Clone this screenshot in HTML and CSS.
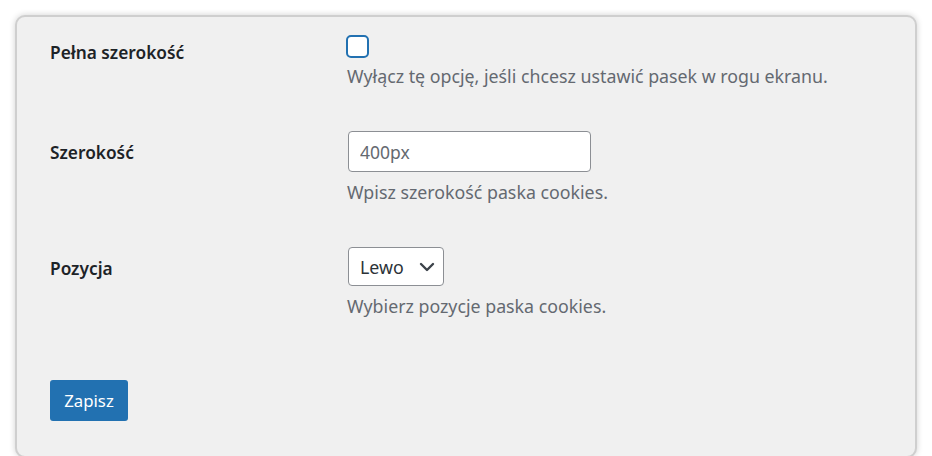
FILE: index.html
```html
<!DOCTYPE html>
<html lang="pl">
<head>
    <meta charset="UTF-8">
    <meta name="viewport" content="width=device-width, initial-scale=1.0">
    <title>Ustawienia paska cookies</title>
    <link rel="stylesheet" href="styles.css">
</head>
<body>
    <div class="panel">
        <form id="cookieForm">
            <div class="row row-first">
                <label class="row-label" for="fullWidth">Pełna szerokość</label>
                <div class="row-field">
                    <input type="checkbox" id="fullWidth" name="fullWidth" class="check">
                    <p class="description">Wyłącz tę opcję, jeśli chcesz ustawić pasek w rogu ekranu.</p>
                </div>
            </div>

            <div class="row">
                <label class="row-label" for="barWidth">Szerokość</label>
                <div class="row-field">
                    <input type="text" id="barWidth" name="barWidth" class="text-input" placeholder="400px">
                    <p class="description">Wpisz szerokość paska cookies.</p>
                </div>
            </div>

            <div class="row">
                <label class="row-label" for="position">Pozycja</label>
                <div class="row-field">
                    <div class="select-wrap">
                        <select id="position" name="position" class="select">
                            <option>Lewo</option>
                            <option>Prawo</option>
                        </select>
                        <svg class="chevron" width="16" height="10" viewBox="0 0 16 10" aria-hidden="true">
                            <path d="M2 2 L8 8 L14 2" fill="none" stroke="#3c434a" stroke-width="2.4" stroke-linecap="round" stroke-linejoin="round"/>
                        </svg>
                    </div>
                    <p class="description">Wybierz pozycje paska cookies.</p>
                </div>
            </div>

            <button type="submit" class="button-primary">Zapisz</button>
        </form>
    </div>
</body>
</html>
```

FILE: styles.css
```css
body {
    font-family: "Noto Sans", "Open Sans", sans-serif;
    background-color: #ffffff;
    margin: 0;
    padding: 15px 15px 0 15px;
    height: 100vh;
    box-sizing: border-box;
    overflow: hidden;
}

.panel {
    background-color: #f0f0f0;
    border: 2px solid #cfcfcf;
    border-radius: 10px;
    box-shadow: 0 0 6px rgba(0, 0, 0, 0.18);
    padding: 18px 33px 0 33px;
    height: 443px;
    box-sizing: border-box;
}

.row {
    display: grid;
    grid-template-columns: 297px 1fr;
    margin-top: 42px;
}

.row-first {
    margin-top: 0;
}

.row-label {
    color: #1d2327;
    font-weight: 600;
    font-size: 17.3px;
    line-height: 26px;
    padding-top: 9px;
}

.row-first .row-label {
    padding-top: 5px;
}

.row-field {
    display: flex;
    flex-direction: column;
    align-items: flex-start;
}

.description {
    color: #646970;
    font-size: 17.8px;
    line-height: 26px;
    margin: 7px 0 0 0;
}

.check {
    appearance: none;
    -webkit-appearance: none;
    width: 23px;
    height: 23px;
    margin: 0 0 0 -1px;
    border: 2px solid #2271b1;
    border-radius: 5px;
    background-color: #ffffff;
    box-sizing: border-box;
}

.row-first .description {
    margin-top: 5px;
}

.text-input {
    width: 243px;
    height: 41px;
    margin: 0 0 0 1px;
    padding: 0 11px;
    border: 1px solid #8c8f94;
    border-radius: 4px;
    background-color: #ffffff;
    font-family: inherit;
    font-size: 17.5px;
    color: #2c3338;
    box-sizing: border-box;
}

.text-input::placeholder {
    color: #646970;
}

.select-wrap {
    position: relative;
    margin-left: 1px;
}

.select {
    appearance: none;
    -webkit-appearance: none;
    display: block;
    width: 96px;
    height: 39px;
    padding: 0 30px 0 11px;
    border: 1px solid #8c8f94;
    border-radius: 4px;
    background-color: #ffffff;
    font-family: inherit;
    font-size: 17.8px;
    color: #2c3338;
    box-sizing: border-box;
}

.chevron {
    position: absolute;
    right: 9px;
    top: 15px;
    pointer-events: none;
}

.button-primary {
    display: block;
    margin-top: 61px;
    background-color: #2271b1;
    color: #ffffff;
    border: none;
    border-radius: 3px;
    width: 78px;
    height: 41px;
    padding: 0;
    font-family: inherit;
    font-size: 16.8px;
    cursor: pointer;
}

.button-primary:hover {
    background-color: #135e96;
}
```
